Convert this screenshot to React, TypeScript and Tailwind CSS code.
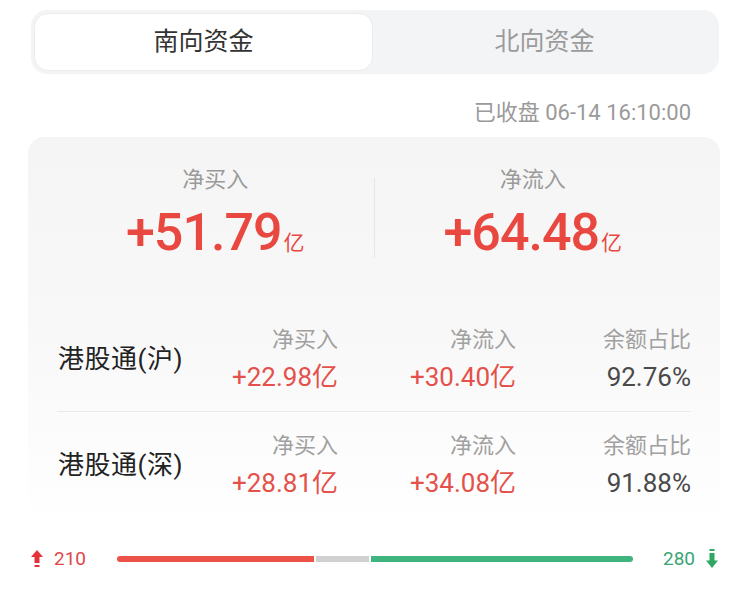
import React from 'react';

const cjk = '[font-family:Roboto,"Noto_Sans_CJK_SC",sans-serif]';

type Row = { name: string; buy: string; flow: string; ratio: string };

const rows: Row[] = [
  { name: '港股通(沪)', buy: '+22.98', flow: '+30.40', ratio: '92.76%' },
  { name: '港股通(深)', buy: '+28.81', flow: '+34.08', ratio: '91.88%' },
];

function UpArrow() {
  return (
    <svg width="14" height="20" viewBox="0 0 14 20" className="shrink-0">
      <polygon points="7,1 13,8 1,8" fill="#e5313a" />
      <rect x="4.5" y="7.5" width="5" height="6.5" fill="#e5313a" />
      <rect x="4.5" y="16" width="5" height="2" fill="#e5313a" />
    </svg>
  );
}

function DownArrow() {
  return (
    <svg width="14" height="22" viewBox="0 0 14 22" className="shrink-0">
      <rect x="4.5" y="1" width="5" height="2" fill="#2fa865" />
      <rect x="4.5" y="5" width="5" height="8" fill="#2fa865" />
      <polygon points="1,12.5 13,12.5 7,20" fill="#2fa865" />
    </svg>
  );
}

function Summary({ label, value }: { label: string; value: string }) {
  return (
    <div className="flex flex-1 flex-col items-center">
      <div className="text-[22px] leading-[28px] text-[#9a9a9a]">{label}</div>
      <div className="mt-[11px] flex items-baseline text-[#e8483f]">
        <span className="text-[52px] font-medium leading-[56px] tracking-[-1px]">{value}</span>
        <span className="ml-[2px] text-[21px] leading-none">亿</span>
      </div>
    </div>
  );
}

function Cell({ label, value, red = true }: { label: string; value: string; red?: boolean }) {
  return (
    <div className="flex flex-col items-end">
      <div className="text-[22px] leading-[28px] text-[#a0a0a0]">{label}</div>
      <div className={`mt-[8px] text-[26px] leading-[30px] ${red ? 'text-[#e4514a]' : 'text-[#4a4a4a]'}`}>{value}</div>
    </div>
  );
}

export default function App() {
  return (
    <div className={`h-[609px] w-[750px] bg-white ${cjk}`}>
      {/* tabs */}
      <div className="mx-[31px] mt-[10px] flex h-[64px] rounded-[16px] bg-[#f3f4f6] p-[3px]">
        <div className="flex w-[339px] items-center justify-center rounded-[14px] border border-[#ececec] bg-white text-[25px] text-[#333333]">
          南向资金
        </div>
        <div className="flex flex-1 items-center justify-center text-[25px] text-[#9b9b9b]">北向资金</div>
      </div>

      <div className="mt-[26px] flex h-[24px] items-center justify-end pr-[59px] text-[22px] text-[#9a9a9a]">
        已收盘 06-14 16:10:00
      </div>

      {/* card */}
      <div className="ml-[28px] mr-[30px] mt-[13px] h-[390px] rounded-t-[16px] bg-gradient-to-b from-[#f5f5f5] via-[#f8f8f8] to-white px-[29px] pt-[29px]">
        <div className="flex">
          <Summary label="净买入" value="+51.79" />
          <div className="mt-[12px] h-[80px] w-px bg-[#e6e6e6]" />
          <Summary label="净流入" value="+64.48" />
        </div>

        <div className="mt-[65px]">
          {rows.map((r, i) => (
            <div key={r.name}>
              {i > 0 && <div className="mb-[20px] mt-[19px] h-px bg-[#ebebeb]" />}
              <div className="grid grid-cols-[1fr_152px_178px_175px] items-center">
                <div className="pl-[1px] text-[26px] tracking-[0.5px] text-[#222222]">{r.name}</div>
                <Cell label="净买入" value={`${r.buy}亿`} />
                <Cell label="净流入" value={`${r.flow}亿`} />
                <Cell label="余额占比" value={r.ratio} red={false} />
              </div>
            </div>
          ))}
        </div>
      </div>

      {/* up / down bar */}
      <div className="mx-[30px] mt-[18px] flex items-center">
        <UpArrow />
        <span className="ml-[10px] w-[33px] text-[19px] text-[#e0474a]">210</span>
        <div className="ml-[30px] flex h-[6px] w-[516px] gap-[2px]">
          <div className="h-full flex-[210] rounded-l-full bg-[#ec5247]" />
          <div className="h-full flex-[57] bg-[#d0d0d0]" />
          <div className="h-full flex-[280] rounded-r-full bg-[#40b47f]" />
        </div>
        <span className="ml-[30px] text-[19px] text-[#3aa574]">280</span>
        <span className="ml-[10px]">
          <DownArrow />
        </span>
      </div>
    </div>
  );
}
